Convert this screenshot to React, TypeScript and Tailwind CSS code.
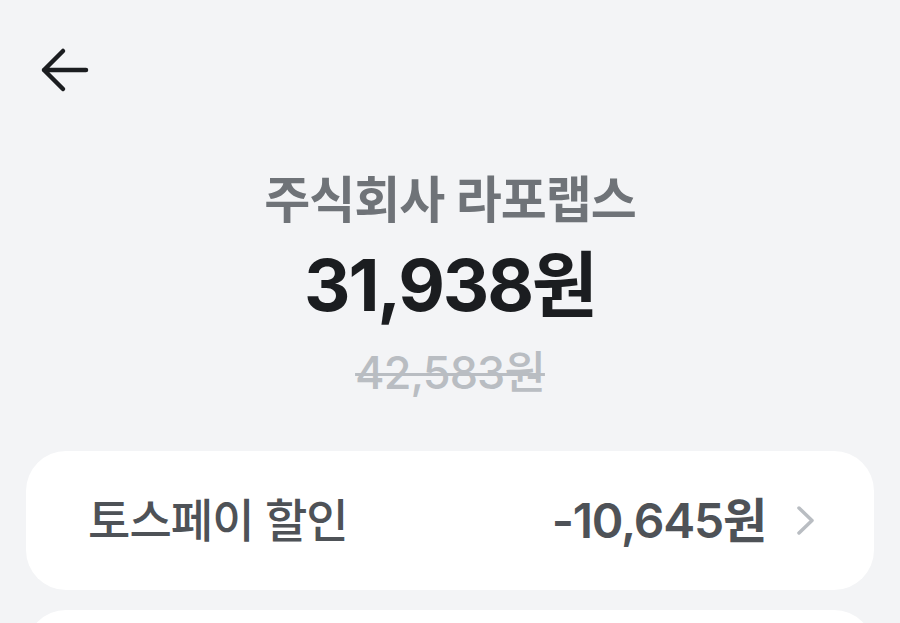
const font = { fontFamily: '"Inter", "Noto Sans CJK KR", sans-serif' }

function BackArrow() {
  return (
    <svg width="50" height="46" viewBox="0 0 50 46" fill="none">
      <path
        d="M46 23H4M23 4L4 23L23 42"
        stroke="#1b1d20"
        strokeWidth="4.5"
        strokeLinecap="round"
        strokeLinejoin="round"
      />
    </svg>
  )
}

function Chevron() {
  return (
    <svg width="20" height="31" viewBox="0 0 20 31" fill="none">
      <path d="M3 3L16 15.5L3 28" stroke="#b9bdc2" strokeWidth="3.5" strokeLinecap="round" strokeLinejoin="round" />
    </svg>
  )
}

function Row({ label, value }: { label: string; value: string }) {
  return (
    <div className="mx-[26px] flex h-[139px] items-center justify-between rounded-[40px] bg-white pl-[62px] pr-[58px]">
      <span className="text-[46px] font-medium tracking-[-0.02em] text-[#4e5257]">{label}</span>
      {value && (
        <div className="flex items-center gap-[30px]">
          <span className="text-[48px] font-semibold tracking-[-0.025em] text-[#4e5257]">{value}</span>
          <Chevron />
        </div>
      )}
    </div>
  )
}

export default function App() {
  return (
    <div className="h-screen overflow-hidden bg-[#f3f4f6]" style={font}>
      <div className="pl-[40px] pt-[47px]">
        <BackArrow />
      </div>
      <div className="mt-[77px] flex flex-col items-center">
        <div className="text-[50px] font-semibold leading-[60px] tracking-[-0.02em] text-[#6f7378]">주식회사 라포랩스</div>
        <div className="mt-[15px] text-[72px] font-bold leading-[80px] tracking-[-0.03em] text-[#1b1d20]">31,938원</div>
        <div className="mt-[22px] text-[45px] font-medium leading-[52px] tracking-[-0.02em] text-[#b9bdc2] line-through decoration-[3px]">
          42,583원
        </div>
      </div>
      <div className="mt-[52px] flex flex-col gap-[20px]">
        <Row label="토스페이 할인" value="-10,645원" />
        <Row label="" value="" />
      </div>
    </div>
  )
}
